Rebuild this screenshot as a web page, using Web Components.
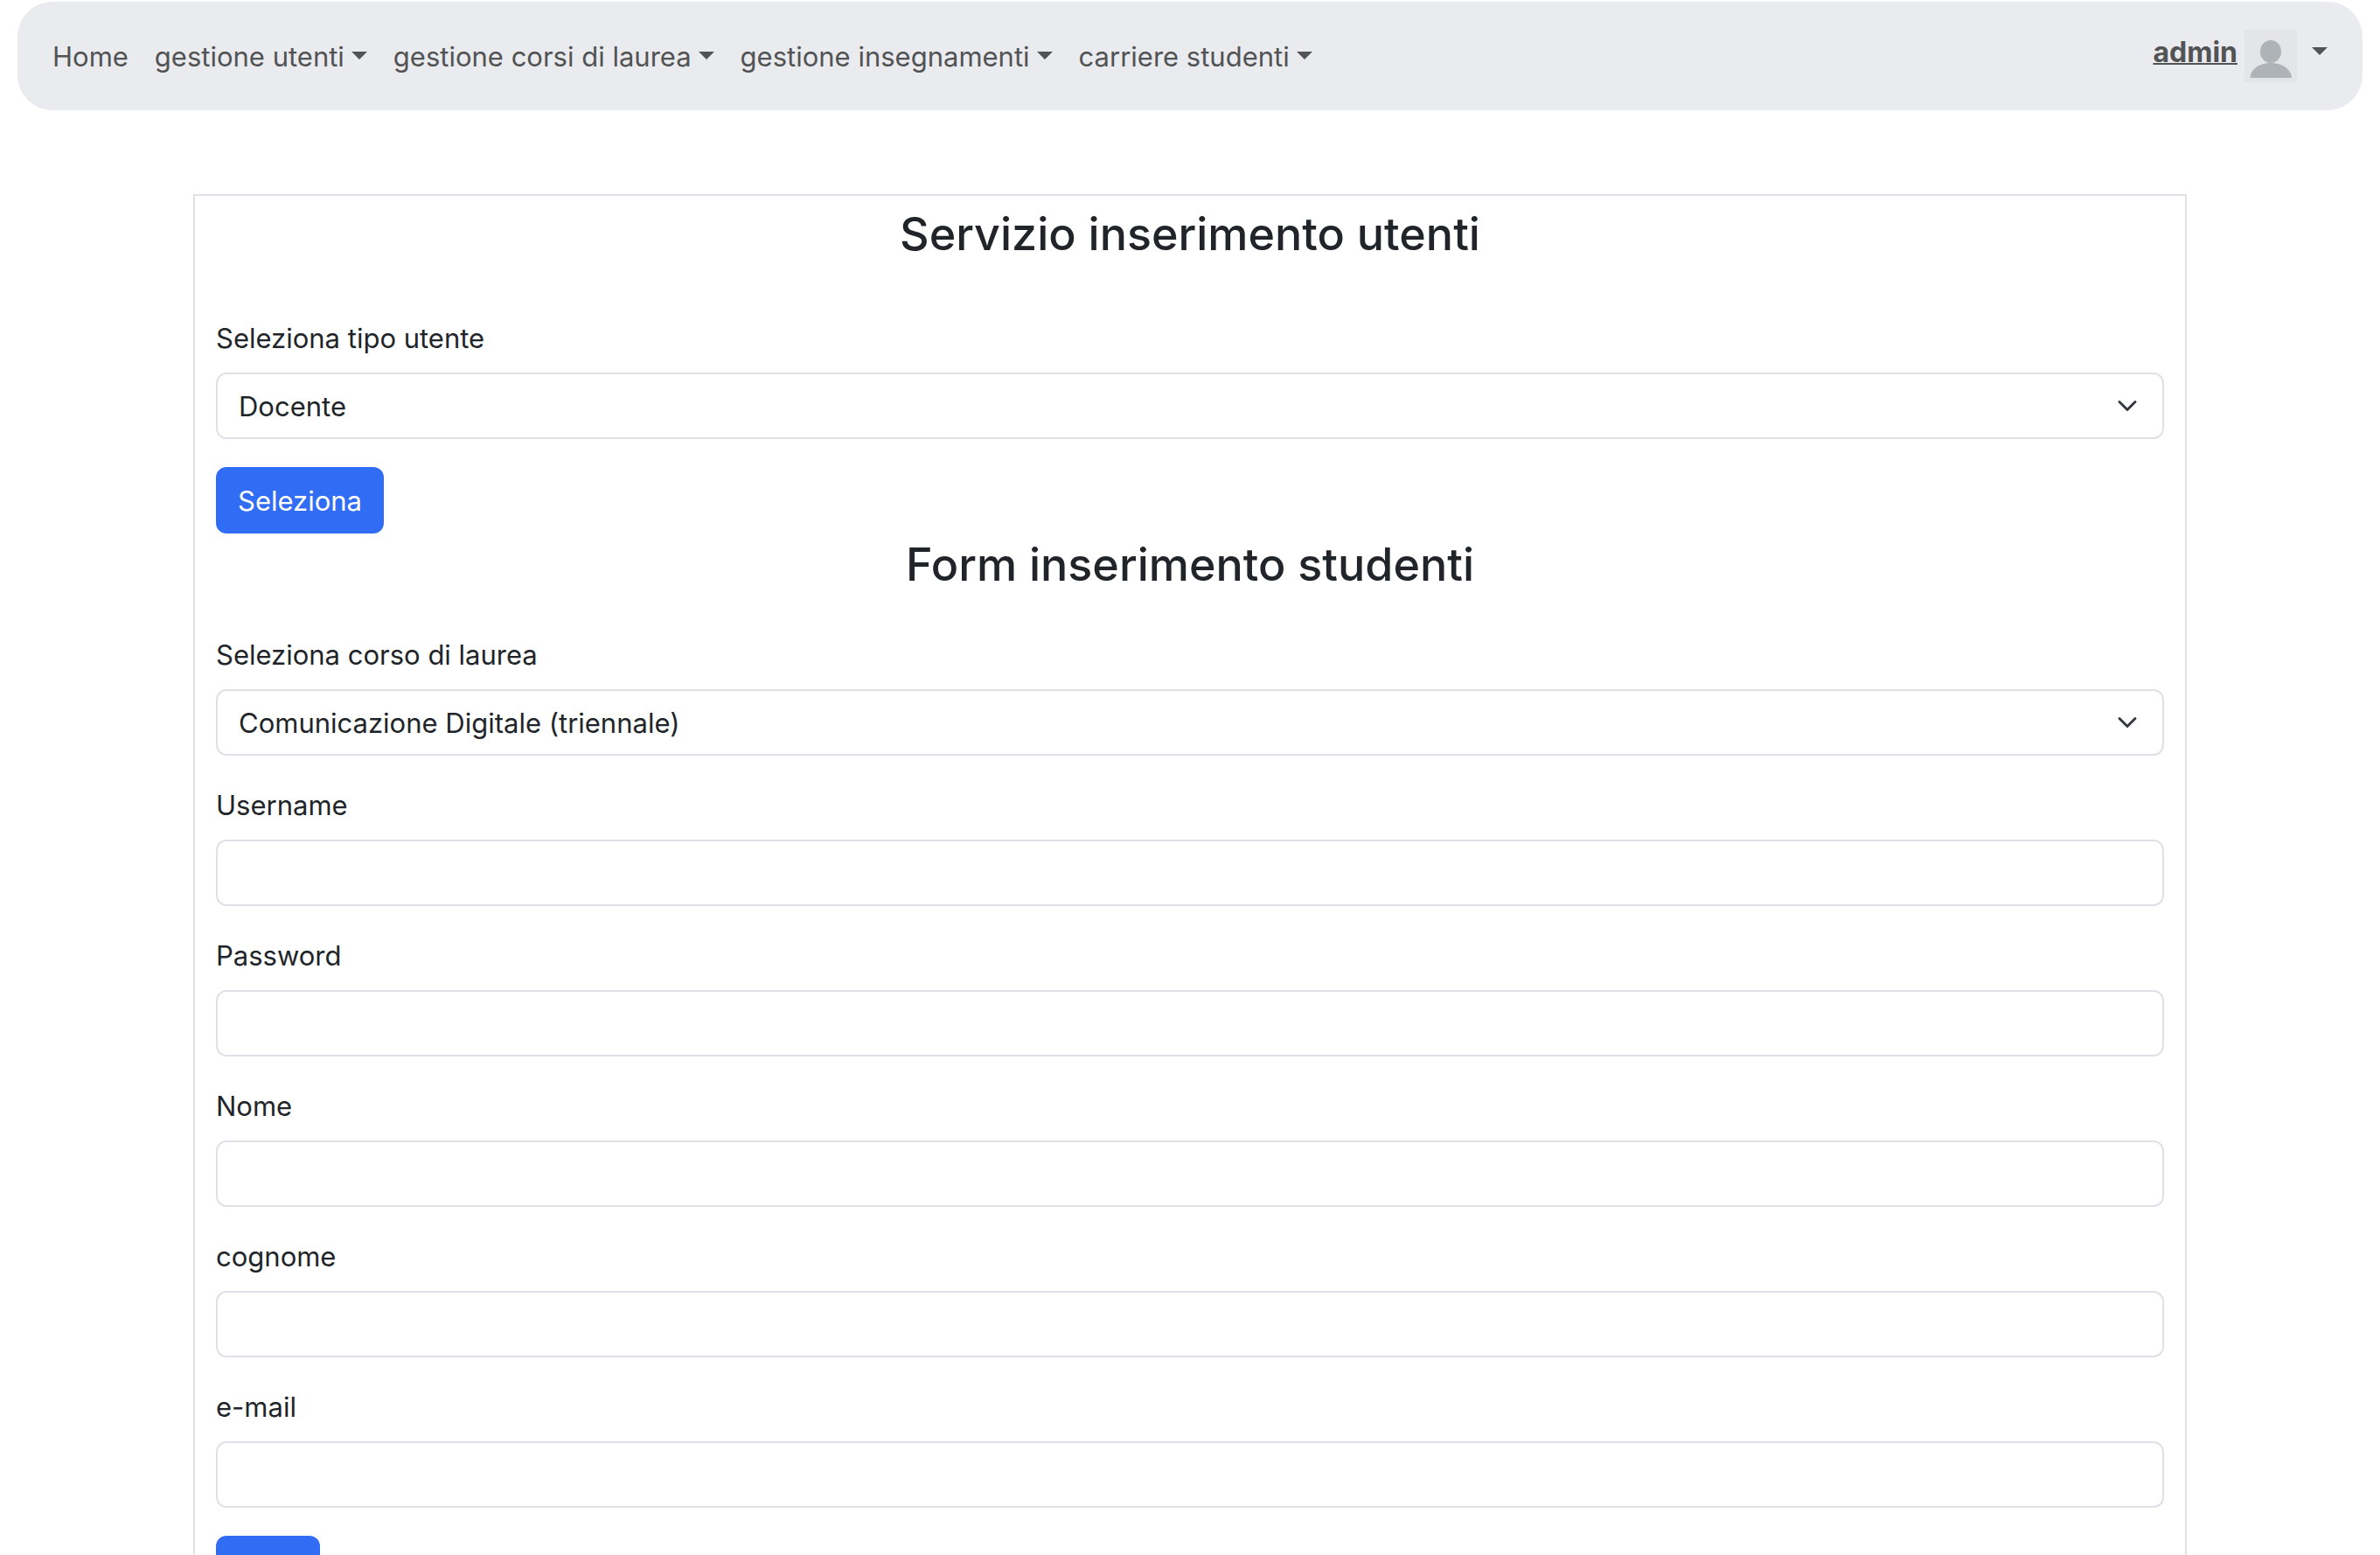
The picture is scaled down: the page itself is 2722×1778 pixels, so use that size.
<!DOCTYPE html>
<html lang="it">
<head>
<meta charset="utf-8">
<meta name="viewport" content="width=device-width, initial-scale=1">
<title>Servizio inserimento utenti</title>
<style>
  :root {
    --ink: #212529;
    --line: #dee2e6;
    --primary: #316cf4;
    --nav-bg: #eaebef;
    --nav-ink: #525354;
  }
  html { scrollbar-width: none; }
  body {
    margin: 0;
    background: #fff;
    color: var(--ink);
    font-family: Inter, "Liberation Sans", sans-serif;
    font-size: 31px;
    line-height: 50px;
  }
</style>
</head>
<body>
<app-page></app-page>

<script>
const define = (name, html, setup) => {
  const template = document.createElement('template');
  template.innerHTML = html;
  customElements.define(name, class extends HTMLElement {
    constructor() {
      super();
      this.attachShadow({ mode: 'open' }).append(template.content.cloneNode(true));
    }
    connectedCallback() {
      if (setup && !this.ready) { this.ready = true; setup(this, this.shadowRoot); }
    }
  });
};

const caret = `
  .caret {
    border-top: 9px solid currentColor;
    border-left: 9px solid transparent;
    border-right: 9px solid transparent;
  }`;

define('nav-link', `
  <style>
    :host { display: block; }
    a { display: flex; align-items: center; gap: 8px; color: var(--nav-ink); text-decoration: none; }
    :host(:not([dropdown])) .caret { display: none; }
    ${caret}
    .caret { margin-bottom: 4px; }
  </style>
  <a href="#"><slot></slot><span class="caret"></span></a>`);

define('user-avatar', `
  <style>
    :host { display: block; }
    svg { display: block; width: 60px; height: 60px; }
  </style>
  <svg viewBox="0 0 60 60" aria-hidden="true">
    <rect width="60" height="60" fill="#e4e5e7"/>
    <ellipse cx="30" cy="25" rx="12" ry="13" fill="#adb3b6"/>
    <path d="M6.500 55C7 45 17 38 30 38s23.500 7 24 17z" fill="#adb3b6"/>
  </svg>`);

define('user-menu', `
  <style>
    :host { display: block; }
    a { display: flex; align-items: center; gap: 8px; color: var(--nav-ink);
        font-size: 32px; font-weight: 700; text-decoration: none; }
    .name { text-decoration: underline; text-decoration-thickness: 2px; padding-bottom: 8px; }
    ${caret}
    .caret { margin: 0 0 12px 9px; }
  </style>
  <a href="#"><span class="name"><slot></slot></span><user-avatar></user-avatar><span class="caret"></span></a>`);

define('app-navbar', `
  <style>
    :host { display: block; padding: 2px 20px 0; }
    nav { display: flex; align-items: center; justify-content: space-between;
          min-height: 124px; box-sizing: border-box; padding: 0 40px;
          border-radius: 40px; background: var(--nav-bg); }
    .links { display: flex; gap: 30px; padding-top: 2px; }
  </style>
  <nav>
    <div class="links"><slot></slot></div>
    <slot name="user"></slot>
  </nav>`);

define('form-card', `
  <style>
    :host { display: block; box-sizing: border-box; max-width: 2280px; margin: 96px auto 0;
            padding: 8px 24px 24px; border: 2px solid var(--line); }
  </style>
  <slot></slot>`);

define('form-section', `
  <style>
    :host { display: block; }
    h2 { margin: 0 0 42px; font-size: 52px; line-height: 72px; font-weight: 500; text-align: center; }
    :host([lead]) h2 { margin-bottom: 58px; }
    form { display: flex; flex-direction: column; align-items: stretch; gap: 32px; }
  </style>
  <h2></h2>
  <form><slot></slot></form>`,
  (host, root) => { root.querySelector('h2').textContent = host.getAttribute('heading'); });

const fieldStyle = `
  :host { display: block; }
  label { display: block; margin-bottom: 14px; }
  input, select { display: block; box-sizing: border-box; width: 100%; height: 76px; margin: 0;
    padding: 2px 24px 0; border: 2px solid var(--line); border-radius: 12px;
    background: #fff; color: inherit; font: inherit; outline: 0; }`;

define('text-field', `
  <style>${fieldStyle}</style>
  <label for="control"></label>
  <input id="control">`,
  (host, root) => {
    root.querySelector('label').textContent = host.getAttribute('label');
    root.querySelector('input').type = host.getAttribute('type') || 'text';
  });

define('select-field', `
  <style>
    ${fieldStyle}
    .box { display: grid; align-items: center; }
    .box > * { grid-area: 1 / 1; }
    select { appearance: none; padding-right: 72px; }
    svg { width: 24px; height: 24px; justify-self: end; margin-right: 30px; pointer-events: none; z-index: 1; }
  </style>
  <label for="control"></label>
  <div class="box">
    <select id="control"></select>
    <svg viewBox="0 0 16 16" fill="none" stroke="#343a40" stroke-width="2"
         stroke-linecap="round" stroke-linejoin="round" aria-hidden="true"><path d="m2 5 6 6 6-6"/></svg>
  </div>`,
  (host, root) => {
    root.querySelector('label').textContent = host.getAttribute('label');
    root.querySelector('select').add(new Option(host.getAttribute('value')));
  });

define('primary-button', `
  <style>
    :host { display: block; }
    button { display: block; height: 76px; padding: 2px 25px 0; border: 0; border-radius: 12px;
      background: var(--primary); color: #fff; font: inherit; cursor: pointer; }
  </style>
  <button type="button"><slot></slot></button>`);

define('app-page', `
  <style>
    :host { display: block; }
  </style>
  <app-navbar>
    <nav-link>Home</nav-link>
    <nav-link dropdown>gestione utenti</nav-link>
    <nav-link dropdown>gestione corsi di laurea</nav-link>
    <nav-link dropdown>gestione insegnamenti</nav-link>
    <nav-link dropdown>carriere studenti</nav-link>
    <user-menu slot="user">admin</user-menu>
  </app-navbar>
  <form-card>
    <form-section lead heading="Servizio inserimento utenti">
      <select-field label="Seleziona tipo utente" value="Docente"></select-field>
      <primary-button>Seleziona</primary-button>
    </form-section>
    <form-section heading="Form inserimento studenti">
      <select-field label="Seleziona corso di laurea" value="Comunicazione Digitale (triennale)"></select-field>
      <text-field label="Username"></text-field>
      <text-field label="Password" type="password"></text-field>
      <text-field label="Nome"></text-field>
      <text-field label="cognome"></text-field>
      <text-field label="e-mail" type="email"></text-field>
      <primary-button>Invia</primary-button>
    </form-section>
  </form-card>`);
</script>
</body>
</html>
